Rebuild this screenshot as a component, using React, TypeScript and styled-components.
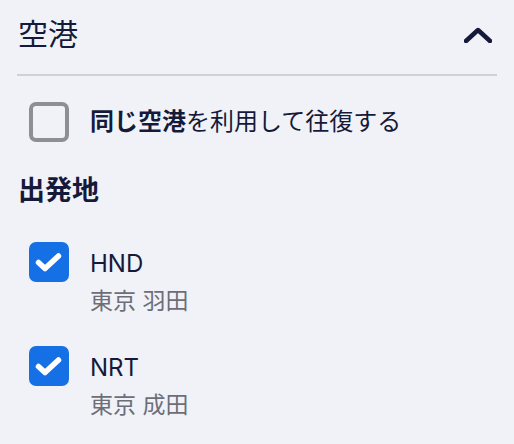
import styled, { createGlobalStyle } from 'styled-components';

const GlobalStyle = createGlobalStyle`
  body {
    margin: 0;
    background: #f0f2f7;
    font-family: Inter, "Noto Sans CJK JP", sans-serif;
    color: #161a3a;
  }
`;

const Panel = styled.div`
  width: 480px;
  padding: 0 17px;
`;

const Header = styled.div`
  display: flex;
  align-items: center;
  justify-content: space-between;
  height: 76px;
  border-bottom: 2px solid #cfd1d7;
  box-sizing: border-box;
  padding: 0 5px 6px 1px;
`;

const HeaderTitle = styled.h2`
  margin: 0;
  font-size: 30px;
  font-weight: 400;
  line-height: 1;
`;

const SameRow = styled.label`
  display: flex;
  align-items: center;
  gap: 21px;
  margin-top: 26px;
  padding-left: 12px;
  font-size: 24px;
  line-height: 30px;

  b {
    font-weight: 700;
  }
`;

const Box = styled.span<{ checked?: boolean }>`
  flex: none;
  width: 40px;
  height: 40px;
  box-sizing: border-box;
  border-radius: 7px;
  border: ${p => (p.checked ? 'none' : '4px solid #8e8e97')};
  background: ${p => (p.checked ? '#1570e6' : 'transparent')};
  display: flex;
  align-items: center;
  justify-content: center;
`;

const SectionTitle = styled.h3`
  margin: 33px 0 0 1px;
  font-size: 27px;
  font-weight: 700;
  line-height: 32px;
`;

const List = styled.div`
  display: flex;
  flex-direction: column;
  gap: 30px;
  margin-top: 35px;
  padding-left: 12px;
`;

const Item = styled.label`
  display: flex;
  align-items: flex-start;
  gap: 21px;
`;

const ItemText = styled.div`
  display: flex;
  flex-direction: column;
`;

const Code = styled.span`
  margin-top: 7px;
  font-size: 24px;
  line-height: 30px;
`;

const City = styled.span`
  margin-top: 7px;
  font-size: 23px;
  line-height: 30px;
  color: #6d6e78;
`;

function Check() {
  return (
    <svg width="40" height="40" viewBox="0 0 40 40">
      <polyline points="9.5,20.5 16,26.5 29.5,14" fill="none" stroke="#fff" strokeWidth="5.5" strokeLinecap="round" strokeLinejoin="round" />
    </svg>
  );
}

function Chevron() {
  return (
    <svg width="28" height="18" viewBox="0 0 28 18">
      <polyline points="2,16 14,5 26,16" fill="none" stroke="#161a3a" strokeWidth="4.5" strokeLinecap="round" strokeLinejoin="round" />
    </svg>
  );
}

const airports = [
  { code: 'HND', city: '東京 羽田' },
  { code: 'NRT', city: '東京 成田' },
];

export default function App() {
  return (
    <>
      <GlobalStyle />
      <Panel>
        <Header>
          <HeaderTitle>空港</HeaderTitle>
          <Chevron />
        </Header>
        <SameRow>
          <Box />
          <span><b>同じ空港</b>を利用して往復する</span>
        </SameRow>
        <SectionTitle>出発地</SectionTitle>
        <List>
          {airports.map(a => (
            <Item key={a.code}>
              <Box checked><Check /></Box>
              <ItemText>
                <Code>{a.code}</Code>
                <City>{a.city}</City>
              </ItemText>
            </Item>
          ))}
        </List>
      </Panel>
    </>
  );
}
